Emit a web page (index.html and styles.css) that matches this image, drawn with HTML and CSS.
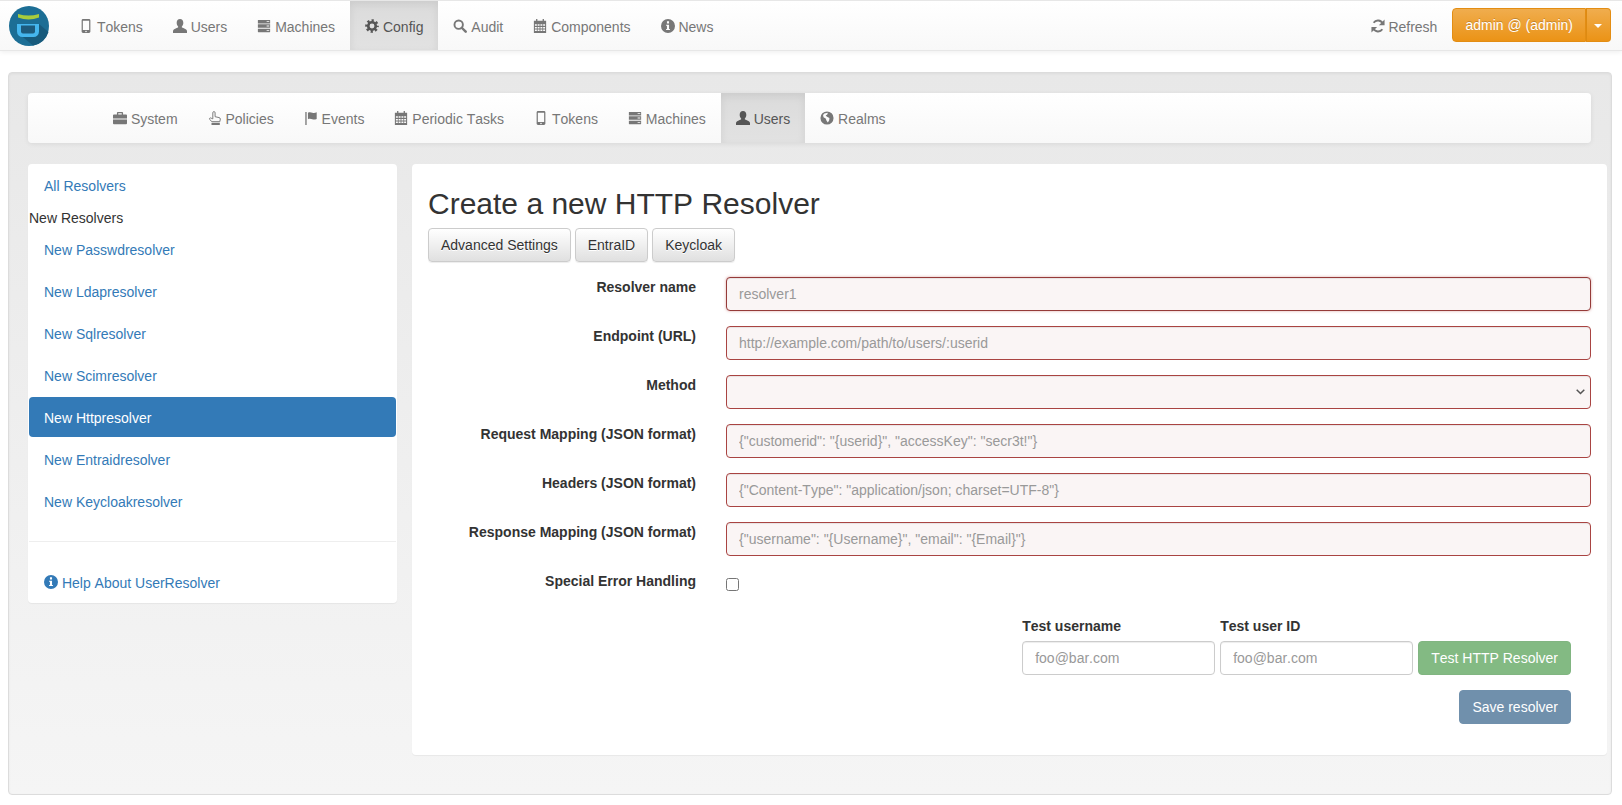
FILE: index.html
```html
<!DOCTYPE html>
<html lang="en">
<head>
<meta charset="utf-8">
<title>privacyIDEA</title>
<link rel="stylesheet" href="styles.css">
</head>
<body>
<svg class="defs" width="0" height="0" aria-hidden="true">
  <symbol id="i-phone" viewBox="0 0 16 16"><path fill-rule="evenodd" d="M4.600 0h6.800C12.300 0 13 .7 13 1.600v12.800c0 .9-.7 1.600-1.600 1.600H4.600C3.700 16 3 15.300 3 14.400V1.600C3 .7 3.700 0 4.600 0zM4.400 2v10.600h7.200V2zM8 13.300a.9.9 0 1 0 0 1.800.9.9 0 0 0 0-1.800z"/></symbol>
  <symbol id="i-user" viewBox="0 0 16 16"><path d="M8 0c2.400 0 3.800 1.800 3.800 4.200 0 1.800-.8 3.400-1.600 4.300-.3.400-.3 1 .1 1.300 1.700.9 5 1.400 5.700 3.500V16H0v-2.700c.7-2.100 4-2.600 5.700-3.500.4-.3.400-.9.100-1.300C5 7.600 4.200 6 4.200 4.200 4.200 1.800 5.600 0 8 0z"/></symbol>
  <symbol id="i-server" viewBox="0 0 16 16"><path fill-rule="evenodd" d="M1.500 1h13c.3 0 .5.2.5.5V5H1V1.500c0-.3.2-.5.5-.5zM11 2.500v1h3v-1zM1 6h14v4H1zM11 7.500v1h3v-1zM1 11h14v3.500c0 .3-.2.5-.5.5h-13c-.3 0-.5-.2-.5-.5zM11 12.500v1h3v-1z"/></symbol>
  <symbol id="i-cog" viewBox="0 0 16 16"><circle cx="8" cy="8" r="4.300" fill="none" stroke="currentColor" stroke-width="3"/><circle cx="8" cy="8" r="6.300" fill="none" stroke="currentColor" stroke-width="3" stroke-dasharray="2.500 2.448" stroke-dashoffset="1.250"/></symbol>
  <symbol id="i-search" viewBox="0 0 16 16"><circle cx="6.500" cy="6.500" r="4.800" fill="none" stroke="currentColor" stroke-width="2.200"/><path d="M10 10l4.500 4.500" fill="none" stroke="currentColor" stroke-width="2.800" stroke-linecap="round"/></symbol>
  <symbol id="i-cal" viewBox="0 0 16 16"><path fill-rule="evenodd" d="M3.500 0h1.500v2H11V0h1.500v2H15v14H1V2h2.500zM2.200 6v1.800h2.200V6zM5.300 6v1.800h2.200V6zM8.500 6v1.800h2.200V6zM11.600 6v1.800h2.200V6zM2.200 9v1.800h2.200V9zM5.300 9v1.800h2.200V9zM8.500 9v1.800h2.200V9zM11.600 9v1.800h2.200V9zM2.200 12v1.800h2.200V12zM5.300 12v1.800h2.200V12zM8.500 12v1.800h2.200V12zM11.600 12v1.800h2.200V12z"/></symbol>
  <symbol id="i-info" viewBox="0 0 16 16"><path fill-rule="evenodd" d="M8 0a8 8 0 1 1 0 16A8 8 0 0 1 8 0zM6.800 2.600v2.400h2.400V2.600zM5.800 6.500v1.300h1v3.600h-1v1.300h4.400v-1.300h-1V6.500z"/></symbol>
  <symbol id="i-refresh" viewBox="0 0 16 16"><path d="M13.300 5.200A6 6 0 0 0 3 4.300M2.700 10.800A6 6 0 0 0 13 11.700" fill="none" stroke="currentColor" stroke-width="2.200"/><path d="M15.500.5v6.500H9zM.5 15.500V9H7z"/></symbol>
  <symbol id="i-brief" viewBox="0 0 16 16"><path fill-rule="evenodd" d="M5.500 1h5c.6 0 1 .4 1 1v2H15c.6 0 1 .4 1 1v3.500H0V5c0-.6.4-1 1-1h3.500V2c0-.6.4-1 1-1zM6 2.500V4h4V2.500zM0 9.800h16V14c0 .6-.4 1-1 1H1c-.6 0-1-.4-1-1z"/></symbol>
  <symbol id="i-hand" viewBox="0 0 16 16"><path d="M5.500 9V2a1.300 1.300 0 0 1 2.600 0v4.500l4.500 1c1 .2 1.500.8 1.500 1.700l-.6 3H4.500L1.800 9.500c-.6-1 .8-2.200 1.800-1.300z" fill="none" stroke="currentColor" stroke-width="1.100"/><path d="M4 13.500h9.500V16H4z"/></symbol>
  <symbol id="i-flag" viewBox="0 0 16 16"><path d="M1.500 1H3v15H1.500zM4.500 2c2-1 3.500-.5 5 0s3 .5 5-.5v7.500c-2 1-3.500 1-5 .5s-3-1-5 0z"/></symbol>
  <symbol id="i-globe" viewBox="0 0 16 16"><path fill-rule="evenodd" d="M8 .5a7.500 7.500 0 1 1 0 15 7.500 7.500 0 0 1 0-15zM5 2.800 3.500 4.500 4 7l2.500 1.500L7.500 11l1.500 2 1.500-2.500.3-2.500-2.800-1.500L6.500 5l1.800-1 .7-2z"/></symbol>
</svg>

<nav class="navbar">
  <a class="logo" href="#" aria-label="privacyIDEA">
    <svg viewBox="0 0 40 40" width="40" height="40">
      <circle cx="20" cy="20" r="20" fill="#1c6e95"/>
      <path d="M9 27L30 18l9.500 8A20 20 0 0 1 24 39.600z" fill="#175a7c"/>
      <path d="M9 8c7 2 14 2 21 0v3.500c-7 2.500-14 2.500-21 0z" fill="#a8cc3c"/>
      <path d="M8 18h22v7.500a5.500 5.500 0 0 1-5.500 5.500h-11A5.500 5.500 0 0 1 8 25.500z" fill="#45b6ee"/>
      <path d="M12 19.500h14v6a2 2 0 0 1-2 2H14a2 2 0 0 1-2-2z" fill="#1d5b7d"/>
    </svg>
  </a>
  <ul class="menu">
    <li><a href="#"><svg class="icon"><use href="#i-phone"/></svg> Tokens</a></li>
    <li><a href="#"><svg class="icon"><use href="#i-user"/></svg> Users</a></li>
    <li><a href="#"><svg class="icon"><use href="#i-server"/></svg> Machines</a></li>
    <li class="active"><a href="#"><svg class="icon"><use href="#i-cog"/></svg> Config</a></li>
    <li><a href="#"><svg class="icon"><use href="#i-search"/></svg> Audit</a></li>
    <li><a href="#"><svg class="icon"><use href="#i-cal"/></svg> Components</a></li>
    <li><a href="#"><svg class="icon"><use href="#i-info"/></svg> News</a></li>
  </ul>
  <div class="nav-right">
    <a class="refresh" href="#"><svg class="icon"><use href="#i-refresh"/></svg> Refresh</a>
    <div class="split">
      <button class="btn-orange" type="button">admin @ (admin)</button>
      <button class="btn-orange caret-btn" type="button" aria-label="Toggle"><span class="caret"></span></button>
    </div>
  </div>
</nav>

<main class="well">
  <nav class="subnav">
    <ul class="menu">
      <li><a href="#"><svg class="icon"><use href="#i-brief"/></svg> System</a></li>
      <li><a href="#"><svg class="icon"><use href="#i-hand"/></svg> Policies</a></li>
      <li><a href="#"><svg class="icon"><use href="#i-flag"/></svg> Events</a></li>
      <li><a href="#"><svg class="icon"><use href="#i-cal"/></svg> Periodic Tasks</a></li>
      <li><a href="#"><svg class="icon"><use href="#i-phone"/></svg> Tokens</a></li>
      <li><a href="#"><svg class="icon"><use href="#i-server"/></svg> Machines</a></li>
      <li class="active"><a href="#"><svg class="icon"><use href="#i-user"/></svg> Users</a></li>
      <li><a href="#"><svg class="icon"><use href="#i-globe"/></svg> Realms</a></li>
    </ul>
  </nav>

  <div class="columns">
    <aside class="sidebar card">
      <ul class="pills">
        <li><a href="#">All Resolvers</a></li>
        <li class="pill-head">New Resolvers</li>
        <li><a href="#">New Passwdresolver</a></li>
        <li><a href="#">New Ldapresolver</a></li>
        <li><a href="#">New Sqlresolver</a></li>
        <li><a href="#">New Scimresolver</a></li>
        <li class="active"><a href="#">New Httpresolver</a></li>
        <li><a href="#">New Entraidresolver</a></li>
        <li><a href="#">New Keycloakresolver</a></li>
      </ul>
      <hr class="divider">
      <a class="help" href="#"><svg class="icon"><use href="#i-info"/></svg> Help About UserResolver</a>
    </aside>

    <section class="content card">
      <h2 class="title">Create a new HTTP Resolver</h2>
      <div class="presets">
        <button class="btn-default" type="button">Advanced Settings</button>
        <button class="btn-default" type="button">EntraID</button>
        <button class="btn-default" type="button">Keycloak</button>
      </div>
      <form class="form">
        <label class="lbl" for="f1">Resolver name</label>
        <input class="ctl bad glow" id="f1" placeholder="resolver1">
        <label class="lbl" for="f2">Endpoint (URL)</label>
        <input class="ctl bad" id="f2" placeholder="http://example.com/path/to/users/:userid">
        <label class="lbl" for="f3">Method</label>
        <select class="ctl bad sel" id="f3"><option></option></select>
        <label class="lbl" for="f4">Request Mapping (JSON format)</label>
        <input class="ctl bad" id="f4" placeholder='{"customerid": "{userid}", "accessKey": "secr3t!"}'>
        <label class="lbl" for="f5">Headers (JSON format)</label>
        <input class="ctl bad" id="f5" placeholder='{"Content-Type": "application/json; charset=UTF-8"}'>
        <label class="lbl" for="f6">Response Mapping (JSON format)</label>
        <input class="ctl bad" id="f6" placeholder='{"username": "{Username}", "email": "{Email}"}'>
        <label class="lbl" for="f7">Special Error Handling</label>
        <div class="check"><input type="checkbox" id="f7"></div>
      </form>
      <div class="test-row">
        <div class="test-field">
          <label class="test-lbl" for="t1">Test username</label>
          <input class="ctl" id="t1" placeholder="foo@bar.com">
        </div>
        <div class="test-field">
          <label class="test-lbl" for="t2">Test user ID</label>
          <input class="ctl" id="t2" placeholder="foo@bar.com">
        </div>
        <button class="btn-off green" type="button">Test HTTP Resolver</button>
      </div>
      <div class="save-row">
        <button class="btn-off blue" type="button">Save resolver</button>
      </div>
    </section>
  </div>
</main>
</body>
</html>
```

FILE: styles.css
```css
* { box-sizing: border-box; }
html, body { height: 100%; }
body {
  margin: 0;
  background: #fff;
  color: #333;
  font: 14px/20px "Liberation Sans", Arial, sans-serif;
  font-kerning: none;
}
a { text-decoration: none; }
ul { list-style: none; margin: 0; padding: 0; }
.defs { position: absolute; }
.icon { width: 14px; height: 14px; fill: currentColor; vertical-align: -1px; }

.navbar {
  display: flex;
  height: 51px;
  border-top: 1px solid #e7e7e7;
  border-bottom: 1px solid #e7e7e7;
  background: linear-gradient(#fff, #f8f8f8);
  box-shadow: 0 1px 5px rgba(0,0,0,.075);
}
.logo { display: block; padding: 5px 0 0 9px; width: 64px; }
.logo svg { display: block; }
.menu { display: flex; }
.menu a { display: block; padding: 16px 15px 14px; color: #777; height: 100%; }
.menu .active a {
  color: #555;
  background: linear-gradient(#dbdbdb, #e2e2e2);
  box-shadow: inset 0 3px 9px rgba(0,0,0,.075);
}
.nav-right { margin-left: auto; display: flex; align-items: flex-start; padding-top: 7px; padding-right: 11px; }
.refresh { color: #777; padding-top: 9px; margin-right: 15px; }
.split { display: flex; }
.btn-orange {
  height: 34px;
  padding: 6px 12px;
  font: inherit;
  font-kerning: none;
  color: #fff;
  background: linear-gradient(#f0ad4e, #eb9316);
  border: 1px solid #e38d13;
  border-radius: 4px 0 0 4px;
  text-shadow: 0 -1px 0 rgba(0,0,0,.2);
}
.caret-btn { width: 25px; padding: 0; border-left: 0; border-radius: 0 4px 4px 0; box-shadow: inset 1px 0 0 #dd8a12; }
.caret { display: inline-block; border-top: 4px solid #fff; border-left: 4px solid transparent; border-right: 4px solid transparent; vertical-align: middle; }

.well {
  margin: 21px 10px 0 8px;
  height: 723px;
  padding: 20px 20px 0 19px;
  background: linear-gradient(#e8e8e8, #f5f5f5);
  border: 1px solid #dcdcdc;
  border-radius: 4px;
  box-shadow: inset 0 1px 3px rgba(0,0,0,.05);
}
.subnav {
  height: 50px;
  padding-left: 70px;
  margin-bottom: 21px;
  border-radius: 4px;
  background: linear-gradient(#fff, #f8f8f8);
  box-shadow: 0 1px 5px rgba(0,0,0,.075);
}
.columns { display: grid; grid-template-columns: 369px 1fr; gap: 15px; align-items: start; margin-right: -16px; }
.card { background: #fff; border-radius: 4px; box-shadow: 0 1px 1px rgba(0,0,0,.05); }

.sidebar { height: 439px; padding: 2px 1px 0; }
.pills a { display: block; padding: 10px 15px; color: #337ab7; border-radius: 4px; }
.pills li + li { margin-top: 2px; }
.pill-head { height: 19px; }
.pill-head ~ li a { padding: 11px 15px 9px; }
.pills .active a { background: #337ab7; color: #fff; }
.divider { margin: 20px 0 31px; border: 0; border-top: 1px solid #eee; }
.help { display: block; padding-left: 15px; color: #337ab7; line-height: 20px; }

.content { height: 591px; padding: 21px 16px 0; }
.title { margin: 0; font-size: 30px; font-weight: 500; line-height: 33px; padding-top: 2px; color: #333; }
.presets { display: flex; gap: 4px; margin-top: 8px; margin-bottom: 15px; }
.btn-default {
  height: 34px;
  padding: 6px 12px;
  font: inherit;
  font-kerning: none;
  color: #333;
  background: linear-gradient(#fff, #e0e0e0);
  border: 1px solid #ccc;
  border-radius: 4px;
  text-shadow: 0 1px 0 #fff;
  box-shadow: 0 1px 1px rgba(0,0,0,.075);
}
.form { display: grid; grid-template-columns: 268px 1fr; column-gap: 30px; row-gap: 15px; }
.lbl { font-weight: 700; text-align: right; }
.ctl {
  display: block;
  width: 100%;
  height: 34px;
  padding: 6px 12px;
  font: inherit;
  font-kerning: none;
  color: #555;
  background: #fff;
  border: 1px solid #ccc;
  border-radius: 4px;
  box-shadow: inset 0 1px 1px rgba(0,0,0,.075);
}
.ctl::placeholder { color: #999; opacity: 1; }
.bad { border-color: #a94442; background-color: #faf5f5; }
.glow { border-color: #953b39; box-shadow: inset 0 1px 1px rgba(0,0,0,.075), 0 0 3px rgba(206,132,131,.7); }
.sel {
  appearance: none;
  background-image: url("data:image/svg+xml,%3Csvg xmlns='http://www.w3.org/2000/svg' width='9' height='6'%3E%3Cpath d='M.7.7l3.800 3.800L8.300.7' fill='none' stroke='%23555' stroke-width='1.500'/%3E%3C/svg%3E");
  background-repeat: no-repeat;
  background-position: right 5px center;
}
.check { height: 20px; padding-top: 7px; }
.check input { display: block; margin: 0; width: 13px; height: 13px; }

.test-row { display: flex; align-items: flex-end; justify-content: flex-end; gap: 5px; padding-right: 20px; margin-top: 25px; }
.test-field { width: 193px; }
.test-lbl { display: block; font-weight: 700; margin-bottom: 5px; }
.btn-off {
  height: 34px;
  padding: 6px 12px;
  font: inherit;
  font-kerning: none;
  color: #fff;
  border: 1px solid transparent;
  border-radius: 4px;
  opacity: .65;
}
.green { background: #419641; border-color: #3e8f3e; }
.blue { background: #245580; border-color: #245580; }
.save-row { display: flex; justify-content: flex-end; padding-right: 20px; margin-top: 15px; }
```
